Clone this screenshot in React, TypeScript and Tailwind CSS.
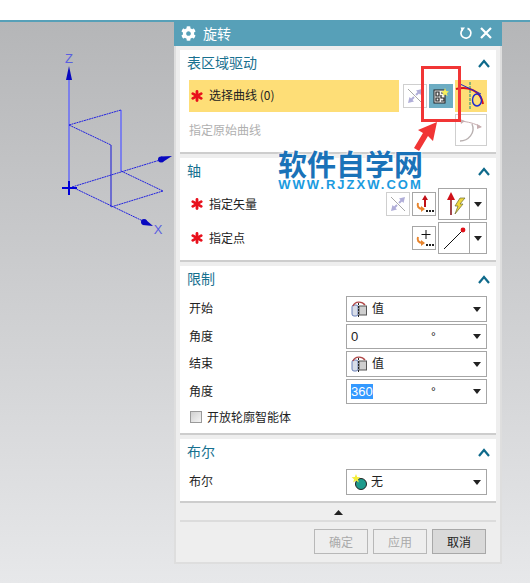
import type { ReactNode } from "react";
import { FaCog } from "react-icons/fa";

const cjk = { fontFamily: '"Noto Sans CJK SC", "Liberation Sans", sans-serif' };

function Caret() {
  return (
    <svg width="8" height="5" viewBox="0 0 8 5" className="shrink-0">
      <polygon points="0,0 8,0 4,5" fill="#222" />
    </svg>
  );
}

function Star() {
  return (
    <svg width="12" height="12" viewBox="0 0 12 12" className="shrink-0">
      <g stroke="#e8101c" strokeWidth="2.8" strokeLinecap="round">
        <line x1="6" y1="1.4" x2="6" y2="10.6" />
        <line x1="1.8" y1="3.6" x2="10.2" y2="8.4" />
        <line x1="10.2" y1="3.6" x2="1.8" y2="8.4" />
      </g>
    </svg>
  );
}

function Chevron() {
  return (
    <svg width="12" height="9" viewBox="0 0 12 9" className="shrink-0">
      <polyline points="1,8 6,2 11,8" fill="none" stroke="#0f6a8b" strokeWidth="2.2" />
    </svg>
  );
}

function CrossIcon() {
  return (
    <svg width="20" height="20" viewBox="0 0 20 20">
      <line x1="3" y1="3" x2="17" y2="17" stroke="#a8a8a8" strokeWidth="1" />
      <line x1="15" y1="5" x2="11" y2="9" stroke="#b0aed8" strokeWidth="2" />
      <polygon points="17,3 11,4.5 15.5,9" fill="#b0aed8" />
      <line x1="5" y1="15" x2="9" y2="11" stroke="#b0aed8" strokeWidth="2" />
      <polygon points="3,17 9,15.5 4.5,11" fill="#b0aed8" />
    </svg>
  );
}

function SelectIcon() {
  return (
    <svg width="20" height="20" viewBox="0 0 20 20">
      <rect x="3" y="4" width="11" height="13" fill="#f2f2f2" stroke="#222" strokeWidth="1" />
      <path d="M5 6h3v4H5zM10 7h3M10 9v3h3v3h-3M5 12h3v3H5z" fill="none" stroke="#222" strokeWidth="1.2" />
      <polygon points="14,2 15.2,5 18,5.4 15.8,7.2 16.6,10 14,8.4 11.6,10 12.3,7.2 10,5.4 12.9,5" fill="#f6ee5a" />
    </svg>
  );
}

function CurveIcon() {
  return (
    <svg width="32" height="32" viewBox="0 0 32 32">
      <line x1="15" y1="2" x2="15" y2="30" stroke="#178a7a" strokeWidth="1" strokeDasharray="3 1" />
      <path d="M1 9 C 12 6, 26 10, 28 24" fill="none" stroke="#d8141c" strokeWidth="2" />
      <path d="M3 3 L26 14" stroke="#1c28d0" strokeWidth="1" />
      <ellipse cx="22" cy="20" rx="4.5" ry="6" fill="none" stroke="#1c28d0" strokeWidth="1.4" />
    </svg>
  );
}

function OriginalCurveIcon() {
  return (
    <svg width="30" height="30" viewBox="0 0 30 30">
      <path d="M5 6 C 12 7, 18 8, 25 12" fill="none" stroke="#c7aeb0" strokeWidth="1" />
      <polygon points="4,4 9,6 5,9" fill="#c7aeb0" />
      <polygon points="26,12 21,9 21,14" fill="#c7aeb0" />
      <path d="M16 9 C 20 18, 12 26, 4 26" fill="none" stroke="#b8b0b0" strokeWidth="1.4" />
    </svg>
  );
}

function VectorMenuIcon() {
  return (
    <svg width="20" height="20" viewBox="0 0 20 20">
      <line x1="11" y1="5" x2="11" y2="13" stroke="#c01018" strokeWidth="2" />
      <polygon points="11,1 14,6 8,6" fill="#c01018" />
      <path d="M9 15 C 4 15, 3 12, 4 9" fill="none" stroke="#e8842c" strokeWidth="2" />
      <polygon points="7,12 11,15 7,18" fill="#e8842c" />
      <g fill="#222">
        <rect x="12" y="16" width="2" height="2" />
        <rect x="15" y="16" width="2" height="2" />
        <rect x="18" y="16" width="2" height="2" />
      </g>
    </svg>
  );
}

function PointMenuIcon() {
  return (
    <svg width="20" height="20" viewBox="0 0 20 20">
      <path d="M12 2v9M7.5 6.5h9" stroke="#111" strokeWidth="1" />
      <path d="M9 15 C 4 15, 3 12, 4 9" fill="none" stroke="#e8842c" strokeWidth="2" />
      <polygon points="7,12 11,15 7,18" fill="#e8842c" />
      <g fill="#222">
        <rect x="12" y="16" width="2" height="2" />
        <rect x="15" y="16" width="2" height="2" />
        <rect x="18" y="16" width="2" height="2" />
      </g>
    </svg>
  );
}

function AutoVectorIcon() {
  return (
    <svg width="26" height="26" viewBox="0 0 26 26">
      <line x1="10" y1="8" x2="10" y2="24" stroke="#8a1a1e" strokeWidth="1.6" />
      <polygon points="10,1 14,9 6,9" fill="#d01018" />
      <polygon points="19,7 24,7 19,13 22,13 14,23 17,15 14,15" fill="#f0d83c" stroke="#6a6a30" strokeWidth="0.7" />
    </svg>
  );
}

function LinePointIcon() {
  return (
    <svg width="26" height="26" viewBox="0 0 26 26">
      <line x1="3" y1="24" x2="21" y2="6" stroke="#111" strokeWidth="1" />
      <circle cx="22" cy="5" r="2.4" fill="#e01018" />
    </svg>
  );
}

function ValueIcon() {
  return (
    <svg width="17" height="16" viewBox="0 0 17 16" className="shrink-0">
      <rect x="1" y="4" width="6" height="11" rx="2" fill="#d8dde8" stroke="#6a80b8" strokeWidth="1" />
      <rect x="8" y="5" width="7.5" height="9" fill="#cfcfcf" stroke="#555" strokeWidth="1" />
      <path d="M2 5 C 4 0, 11 0, 14 4" fill="none" stroke="#b04848" strokeWidth="1.4" />
      <line x1="7.5" y1="2" x2="7.5" y2="16" stroke="#222" strokeWidth="1" strokeDasharray="2 1" />
    </svg>
  );
}

function BoolIcon() {
  return (
    <svg width="16" height="16" viewBox="0 0 16 16" className="shrink-0">
      <circle cx="10" cy="10" r="5.5" fill="#1d9a8c" stroke="#222" strokeWidth="1" />
      <polygon points="5,0 6.2,3 9.4,3.2 7,5.2 7.8,8.4 5,6.6 2.2,8.4 3,5.2 0.6,3.2 3.8,3" fill="#f4ee3a" />
    </svg>
  );
}

function Section({ title, className, children }: { title: string; className: string; children: ReactNode }) {
  return (
    <section className={`bg-white border-b-2 border-[#cdcdcd] ${className}`}>
      <div className="h-[26px] flex items-center justify-between pl-[7px] pr-[6px]">
        <span className="text-[14px] text-[#17708f] -mt-[2px]">{title}</span>
        <Chevron />
      </div>
      {children}
    </section>
  );
}

function IconBtn({ children, muted }: { children: ReactNode; muted?: boolean }) {
  return (
    <div className={`w-6 h-6 flex items-center justify-center border ${muted ? "border-[#cfcfcf]" : "border-[#a6a6a6]"}`}>
      {children}
    </div>
  );
}

function SplitBtn({ children }: { children: ReactNode }) {
  return (
    <div className="w-[49px] h-8 flex border border-[#a6a6a6]">
      <div className="w-[31px] flex items-center justify-center border-r border-[#a6a6a6]">{children}</div>
      <div className="flex-1 flex items-center justify-center">
        <Caret />
      </div>
    </div>
  );
}

function Field({ label, height, children }: { label: string; height: string; children: ReactNode }) {
  return (
    <div className="flex items-center justify-between pl-[9px] pr-[9px]">
      <span className="text-[12px] text-[#222] -mt-[2px]">{label}</span>
      <div className={`w-[141px] ${height} flex items-center pl-[4px] pr-[5px] border border-[#a6a6a6] bg-white`}>{children}</div>
    </div>
  );
}

function NumberValue({ value, selected }: { value: string; selected?: boolean }) {
  return (
    <>
      <span className="w-[80px] text-[13px] text-[#222]" style={{ fontFamily: '"Liberation Sans", sans-serif' }}>
        <span className={selected ? "bg-[#3399ff] text-white" : ""}>{value}</span>
      </span>
      <span className="text-[12px] text-[#222]" style={{ fontFamily: '"Liberation Sans", sans-serif' }}>°</span>
      <span className="ml-auto">
        <Caret />
      </span>
    </>
  );
}

function FooterBtn({ label, active }: { label: string; active?: boolean }) {
  return (
    <div
      className={`w-[54px] h-[25px] flex items-center justify-center text-[12px] border-[1.5px] ${
        active ? "bg-[#d9d9d9] border-[#a8a8a8] text-[#222]" : "border-[#b8b8b8] text-[#aaaaaa]"
      }`}
    >
      {label}
    </div>
  );
}

function Viewport() {
  return (
    <svg width="174" height="250" viewBox="0 0 174 250" className="absolute left-0 top-0">
      <g fill="none">
        <line x1="69" y1="80" x2="69" y2="188" stroke="#7c80ea" strokeWidth="2" />
        <line x1="121" y1="110" x2="121" y2="171" stroke="#7c80ea" strokeWidth="2" />
        <line x1="111" y1="145" x2="111" y2="207" stroke="#1414d8" strokeWidth="1" />
        <g stroke="#2020e0" strokeWidth="1" strokeDasharray="2 0.6">
          <line x1="69" y1="125" x2="121" y2="110" />
          <line x1="69" y1="125" x2="111" y2="145" />
          <line x1="72" y1="187" x2="160" y2="160" />
          <line x1="72" y1="187" x2="145" y2="222" />
          <line x1="121" y1="171" x2="163" y2="191" />
          <line x1="163" y1="191" x2="111" y2="207" />
        </g>
        <path d="M62 188h15M69 181v14" stroke="#0000d8" strokeWidth="2" />
      </g>
      <polygon points="69,66 72,80 66,80" fill="#0808c0" />
      <circle cx="161" cy="159.5" r="3" fill="#0808c0" />
      <polygon points="172,156 161,156.5 162,162.5" fill="#0808c0" />
      <circle cx="144" cy="222" r="3" fill="#0808c0" />
      <polygon points="153,226 145.5,219.5 142.5,225" fill="#0808c0" />
      <text x="69" y="63" textAnchor="middle" fontSize="13" fill="#5a60e0" style={{ fontFamily: '"Liberation Sans", sans-serif' }}>Z</text>
      <text x="158" y="234" textAnchor="middle" fontSize="13" fill="#5a60e0" style={{ fontFamily: '"Liberation Sans", sans-serif' }}>X</text>
    </svg>
  );
}

export default function App() {
  return (
    <div className="relative w-[530px] h-[583px] overflow-hidden bg-white" style={cjk}>
      <div className="h-5" />
      <div className="h-[2px] bg-[#57a0b8]" />
      <div className="h-[561px] bg-gradient-to-b from-[#b5b6b8] to-[#e7e8ea]" />
      <Viewport />

      {/* rotate dialog */}
      <div className="absolute left-[174px] top-5 w-[328px] h-[544px] flex flex-col bg-[#eeeeee] border-2 border-t-0 border-[#dedede]">
        <div className="h-[26px] -mx-[2px] bg-[#57a0b8] flex items-center pl-[7px] pr-[10px] shrink-0">
          <FaCog className="text-white w-[15px] h-[15px]" />
          <span className="ml-[7px] text-[14px] text-white">旋转</span>
          <svg width="14" height="14" viewBox="0 0 14 14" className="ml-auto">
            <path d="M8.5 2.4 A5 5 0 1 1 3.4 3.6" fill="none" stroke="#fff" strokeWidth="1.7" />
            <polygon points="1.6,1.4 6,1.6 3,5.6" fill="#fff" />
          </svg>
          <svg width="12" height="12" viewBox="0 0 12 12" className="ml-[7px]">
            <path d="M1 1l10 10M11 1L1 11" stroke="#fff" strokeWidth="2.2" />
          </svg>
        </div>

        <div className="flex flex-col gap-1 pt-1 px-1">
          <Section title="表区域驱动" className="h-[104px]">
            <div className="flex items-center mt-1 ml-[9px] h-8">
              <div className="w-[210px] h-8 bg-[#fede77] flex items-center gap-[6px] pl-[2px]">
                <Star />
                <span className="text-[12px] text-[#222] -mt-[2px]">选择曲线 (0)</span>
              </div>
              <div className="ml-1">
                <IconBtn muted>
                  <CrossIcon />
                </IconBtn>
              </div>
              <div className="ml-[2px] w-6 h-6 bg-[#6dadc3] flex items-center justify-center">
                <SelectIcon />
              </div>
              <div className="ml-[2px] w-8 h-8 bg-[#fede77]">
                <CurveIcon />
              </div>
            </div>
            <div className="flex items-center justify-between mt-[2px] pl-[9px] pr-[9px] h-8">
              <span className="text-[12px] text-[#b0b0b0]">指定原始曲线</span>
              <div className="w-8 h-8 flex items-center justify-center border border-[#cfcfcf]">
                <OriginalCurveIcon />
              </div>
            </div>
          </Section>

          <Section title="轴" className="h-[104px]">
            <div className="flex items-center mt-1 pl-[11px] pr-[9px] h-8">
              <Star />
              <span className="ml-[6px] text-[12px] text-[#222]">指定矢量</span>
              <div className="ml-auto flex items-center gap-[2px]">
                <IconBtn muted>
                  <CrossIcon />
                </IconBtn>
                <IconBtn>
                  <VectorMenuIcon />
                </IconBtn>
                <SplitBtn>
                  <AutoVectorIcon />
                </SplitBtn>
              </div>
            </div>
            <div className="flex items-center mt-[2px] pl-[11px] pr-[9px] h-8">
              <Star />
              <span className="ml-[6px] text-[12px] text-[#222]">指定点</span>
              <div className="ml-auto flex items-center gap-[2px]">
                <IconBtn>
                  <PointMenuIcon />
                </IconBtn>
                <SplitBtn>
                  <LinePointIcon />
                </SplitBtn>
              </div>
            </div>
          </Section>

          <Section title="限制" className="h-[169px]">
            <div className="flex flex-col gap-[2px] mt-1">
              <Field label="开始" height="h-[26px]">
                <ValueIcon />
                <span className="ml-[4px] text-[12px] text-[#222] -mt-[2px]">值</span>
                <span className="ml-auto">
                  <Caret />
                </span>
              </Field>
              <Field label="角度" height="h-[25px]">
                <NumberValue value="0" />
              </Field>
              <Field label="结束" height="h-[26px]">
                <ValueIcon />
                <span className="ml-[4px] text-[12px] text-[#222] -mt-[2px]">值</span>
                <span className="ml-auto">
                  <Caret />
                </span>
              </Field>
              <Field label="角度" height="h-[25px]">
                <NumberValue value="360" selected />
              </Field>
            </div>
            <div className="flex items-center gap-[5px] mt-1 pl-[10px]">
              <div className="w-3 h-3 border border-[#9a9a9a] bg-gradient-to-br from-[#d0d0d0] to-[#f4f4f4]" />
              <span className="text-[12px] text-[#222]">开放轮廓智能体</span>
            </div>
          </Section>

          <Section title="布尔" className="h-[64px]">
            <div className="mt-1">
              <Field label="布尔" height="h-[26px]">
                <BoolIcon />
                <span className="ml-[4px] text-[12px] text-[#222] -mt-[2px]">无</span>
                <span className="ml-auto">
                  <Caret />
                </span>
              </Field>
            </div>
          </Section>
        </div>

        <div className="mx-1 mt-[1px] h-[18px] pt-[1px] flex items-center justify-center border-b-2 border-[#dcdcdc] shrink-0">
          <svg width="9" height="5" viewBox="0 0 9 5">
            <polygon points="0,5 9,5 4.5,0" fill="#222" />
          </svg>
        </div>
        <div className="flex justify-end gap-[5px] pt-[7px] pr-[14px]">
          <FooterBtn label="确定" />
          <FooterBtn label="应用" />
          <FooterBtn label="取消" active />
        </div>
      </div>

      {/* tutorial annotations drawn over the dialog */}
      <div className="absolute left-[421px] top-[66px] w-[40px] h-[56px] border-[3px] border-[#f13535]" />
      <svg width="30" height="34" viewBox="0 0 30 34" className="absolute left-[412px] top-[120px]">
        <polygon points="25,2 21,21 16,16 7,31 2,28 11,13 6,10" fill="#f13535" />
      </svg>
      <div className="absolute left-[278px] top-[149px] flex flex-col items-center">
        <span className="text-[29px] leading-[29px] font-bold text-[#1a72b8] [text-shadow:0_0_2px_#fff,0_0_2px_#fff,0_0_2px_#fff]">
          软件自学网
        </span>
        <span
          className="mt-[1px] text-[13px] leading-[12px] font-bold text-[#1b9be0] tracking-[2px] [text-shadow:0_0_2px_#fff,0_0_2px_#fff]"
          style={{ fontFamily: '"Liberation Sans", sans-serif' }}
        >
          WWW.RJZXW.COM
        </span>
      </div>
    </div>
  );
}
